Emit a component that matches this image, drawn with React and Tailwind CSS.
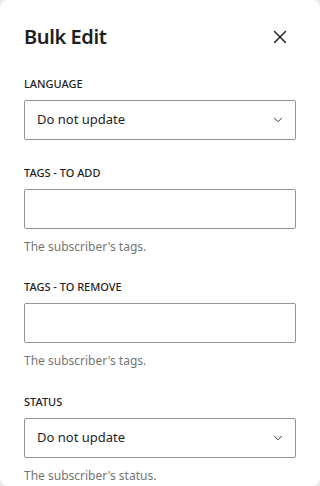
import { X, ChevronDown } from "lucide-react"

const Label = ({ children }) => (
  <div className="text-[11px] font-medium uppercase leading-[16px] text-[#1e1e1e] mb-[8px]">{children}</div>
)

const Select = () => (
  <div className="h-[40px] rounded-[2px] border border-[#949494] flex items-center justify-between pl-[12px] pr-[10px]">
    <span className="text-[13px] text-[#1e1e1e]">Do not update</span>
    <ChevronDown className="w-[14px] h-[14px] text-[#1e1e1e]" strokeWidth={1.5} />
  </div>
)

const Input = () => <div className="h-[40px] rounded-[2px] border border-[#949494] bg-white" />

const Help = ({ children }) => (
  <div className="text-[12px] leading-[16px] text-[#757575] mt-[10px]">{children}</div>
)

export default function App() {
  return (
    <div className="w-[320px] h-[486px] bg-[#e9e9e9]" style={{ fontFamily: '"Noto Sans", sans-serif' }}>
      <div className="h-full bg-white rounded-[8px] px-[24px] overflow-hidden">
        <div className="flex items-center justify-between h-[74px]">
          <h1 className="text-[20px] font-semibold tracking-[-0.4px] text-[#1e1e1e]">Bulk Edit</h1>
          <X className="w-[22px] h-[22px] text-[#1e1e1e] mr-[5px]" strokeWidth={1.5} />
        </div>
        <div className="pt-[2px]">
          <Label>LANGUAGE</Label>
          <Select />
        </div>
        <div className="mt-[25px]">
          <Label>Tags - to add</Label>
          <Input />
          <Help>The subscriber's tags.</Help>
        </div>
        <div className="mt-[24px]">
          <Label>Tags - to remove</Label>
          <Input />
          <Help>The subscriber's tags.</Help>
        </div>
        <div className="mt-[25px]">
          <Label>Status</Label>
          <Select />
          <Help>The subscriber's status.</Help>
        </div>
      </div>
    </div>
  )
}
